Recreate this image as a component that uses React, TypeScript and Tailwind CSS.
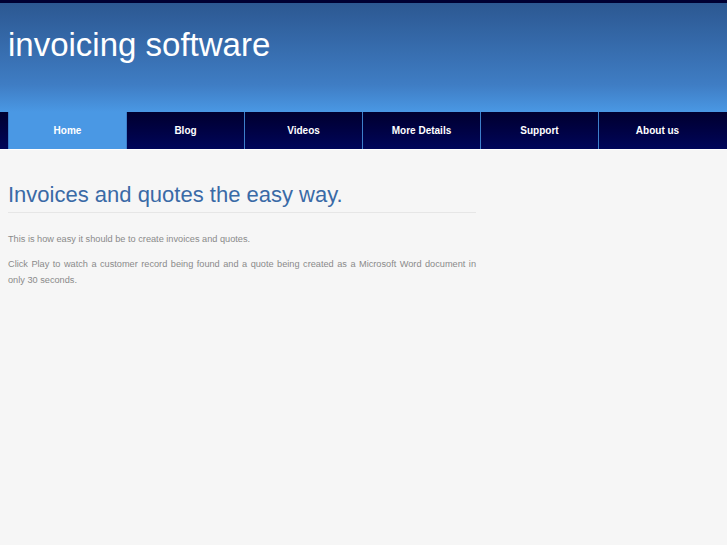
const tabs = ['Home', 'Blog', 'Videos', 'More Details', 'Support', 'About us'];

export default function App() {
  return (
    <div className="min-h-[545px] bg-[#f6f6f6] font-['Liberation_Sans',Arial,sans-serif]">
      {/* Header */}
      <header className="border-t-[3px] border-[#000033] bg-gradient-to-b from-[#2c5892] via-[#3f7dc4] via-75% to-[#4a98e4]">
        <div className="h-[109px] pl-2 pt-[22px]">
          <h1 className="text-[33px] leading-[40px] text-white">invoicing software</h1>
        </div>
      </header>

      {/* Navigation */}
      <nav className="flex h-[38px] border-b border-white bg-gradient-to-b from-[#00002f] to-[#00065a] pl-2">
        {tabs.map((tab, i) => (
          <a
            key={tab}
            href="#"
            className={`flex w-[118px] items-center justify-center border-l border-[#3d7fcb] text-[10px] font-bold text-white ${
              i === 0 ? 'bg-[#4a98e4]' : ''
            }`}
          >
            {tab}
          </a>
        ))}
      </nav>

      {/* Content */}
      <main className="w-[468px] ml-2 pt-[32px]">
        <h2 className="border-b border-[#e6e6e6] pb-[4px] text-[22px] leading-[26px] text-[#3a6aa6]">
          Invoices and quotes the easy way.
        </h2>
        <p className="mt-[18px] text-[9.2px] leading-[16px] text-[#8a8a8a]">
          This is how easy it should be to create invoices and quotes.
        </p>
        <p className="mt-[9px] text-justify text-[9.2px] leading-[16px] text-[#8a8a8a]">
          Click Play to watch a customer record being found and a quote being created as a Microsoft Word document in only 30 seconds.
        </p>
      </main>
    </div>
  );
}
